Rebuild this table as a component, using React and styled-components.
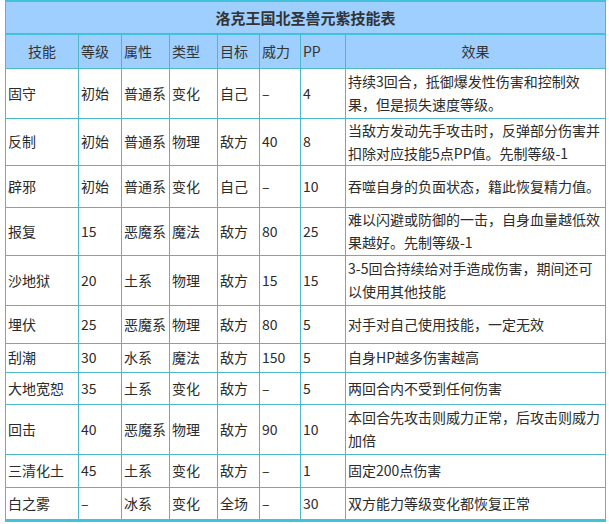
import React from 'react';
import styled, { createGlobalStyle } from 'styled-components';

const GlobalStyle = createGlobalStyle`
  body {
    margin: 0;
    background: #ffffff;
    font-family: "Noto Sans CJK SC", "Liberation Sans", sans-serif;
  }
`;

const Page = styled.div`
  padding: 0 4px 0 5px;
`;

const Table = styled.table`
  width: 600px;
  border-collapse: collapse;
  table-layout: fixed;
  border-top: 2px solid #3fc2da;
  border-bottom: 3px solid #3fc2da;
  border-left: 1px solid #4fb8c8;
  border-right: 1px solid #4fb8c8;
  color: #2b2b2b;
  font-size: 14px;
`;

const Row = styled.tr`
  height: ${(p) => p.$h}px;
`;

const TitleCell = styled.th`
  padding: 0;
  background: #9fcfff;
  border-bottom: 2px solid #3fc2da;
  font-size: 15px;
  font-weight: bold;
  line-height: 20px;
  color: #333333;
  text-align: center;
  vertical-align: middle;
`;

const HeadCell = styled.th`
  padding: 0 2px;
  background: #9fcfff;
  border: 1px solid #4fb8c8;
  border-top: none;
  font-weight: normal;
  color: #333333;
  text-align: ${(p) => (p.$center ? 'center' : 'left')};
  vertical-align: middle;
  line-height: 20px;
`;

const Cell = styled.td`
  padding: 0 2px;
  border: 1px solid #4fb8c8;
  text-align: left;
  vertical-align: middle;
  line-height: 23px;
  white-space: ${(p) => (p.$wrap ? 'normal' : 'nowrap')};
  overflow: hidden;
`;

const columns = [
  { label: '技能', width: 73, center: true },
  { label: '等级', width: 43 },
  { label: '属性', width: 48 },
  { label: '类型', width: 48 },
  { label: '目标', width: 42 },
  { label: '威力', width: 41 },
  { label: 'PP', width: 45 },
  { label: '效果', width: 260, center: true },
];

const skills = [
  ['固守', '初始', '普通系', '变化', '自己', '–', '4', '持续3回合，抵御爆发性伤害和控制效果，但是损失速度等级。', 50],
  ['反制', '初始', '普通系', '物理', '敌方', '40', '8', '当敌方发动先手攻击时，反弹部分伤害并扣除对应技能5点PP值。先制等级-1', 47],
  ['辟邪', '初始', '普通系', '变化', '自己', '–', '10', '吞噬自身的负面状态，籍此恢复精力值。', 42],
  ['报复', '15', '恶魔系', '魔法', '敌方', '80', '25', '难以闪避或防御的一击，自身血量越低效果越好。先制等级-1', 48],
  ['沙地狱', '20', '土系', '物理', '敌方', '15', '15', '3-5回合持续给对手造成伤害，期间还可以使用其他技能', 50],
  ['埋伏', '25', '恶魔系', '物理', '敌方', '80', '5', '对手对自己使用技能，一定无效', 38],
  ['刮潮', '30', '水系', '魔法', '敌方', '150', '5', '自身HP越多伤害越高', 29],
  ['大地宽恕', '35', '土系', '变化', '敌方', '–', '5', '两回合内不受到任何伤害', 32],
  ['回击', '40', '恶魔系', '物理', '敌方', '90', '10', '本回合先攻击则威力正常，后攻击则威力加倍', 50],
  ['三清化土', '45', '土系', '变化', '敌方', '–', '1', '固定200点伤害', 33],
  ['白之雾', '–', '冰系', '变化', '全场', '–', '30', '双方能力等级变化都恢复正常', 33],
];

const App = () => {
  return (
    <Page>
      <GlobalStyle />
      <Table>
        <colgroup>
          {columns.map((c) => (
            <col key={c.label} style={{ width: c.width }} />
          ))}
        </colgroup>
        <thead>
          <Row $h={33}>
            <TitleCell colSpan={8}>洛克王国北圣兽元紫技能表</TitleCell>
          </Row>
          <Row $h={34}>
            {columns.map((c) => (
              <HeadCell key={c.label} $center={c.center}>
                {c.label}
              </HeadCell>
            ))}
          </Row>
        </thead>
        <tbody>
          {skills.map((row) => (
            <Row key={row[0]} $h={row[8]}>
              {row.slice(0, 8).map((v, i) => (
                <Cell key={i} $wrap={i === 7}>
                  {v}
                </Cell>
              ))}
            </Row>
          ))}
        </tbody>
      </Table>
    </Page>
  );
};

export default App;
